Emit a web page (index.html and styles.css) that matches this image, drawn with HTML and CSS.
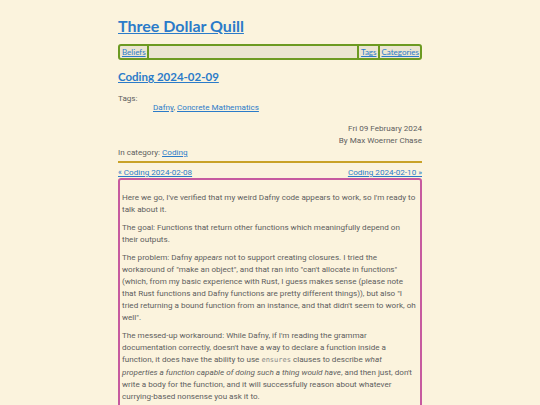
FILE: index.html
```html
<!DOCTYPE html>
<html>
<head>
<meta charset="utf-8">
<link rel="stylesheet" href="styles.css">
</head>
<body>
<div class="page">
  <header class="site-header">
    <h1 class="site-title"><a href="#">Three Dollar Quill</a></h1>
    <nav class="menu">
      <a class="menu-item first" href="#">Beliefs</a>
      <span class="menu-fill"></span>
      <a class="menu-item" href="#">Tags</a>
      <a class="menu-item" href="#">Categories</a>
    </nav>
  </header>
  <article>
    <h2 class="entry-title"><a href="#">Coding 2024-02-09</a></h2>
    <dl class="tags">
      <dt>Tags:</dt>
      <dd><a href="#">Dafny</a>, <a href="#">Concrete Mathematics</a></dd>
    </dl>
    <div class="byline">
      <div>Fri 09 February 2024</div>
      <div>By Max Woerner Chase</div>
    </div>
    <div class="category">In category: <a href="#">Coding</a></div>
    <hr class="rule">
    <div class="pager">
      <a href="#">« Coding 2024-02-08</a>
      <a href="#">Coding 2024-02-10 »</a>
    </div>
    <div class="entry">
      <p>Here we go, I've verified that my weird Dafny code appears to work, so I'm ready to talk about it.</p>
      <p>The goal: Functions that return other functions which meaningfully depend on their outputs.</p>
      <p>The problem: Dafny <em>appears</em> not to support creating closures. I tried the workaround of "make an object", and that ran into "can't allocate in functions" (which, from my basic experience with Rust, I guess makes sense (please note that Rust functions and Dafny functions are pretty different things)), but also "I tried returning a bound function from an instance, and that didn't seem to work, oh well".</p>
      <p>The messed-up workaround: While Dafny, if I'm reading the grammar documentation correctly, doesn't have a way to declare a function inside a function, it does have the ability to use <code>ensures</code> clauses to describe <em>what properties a function capable of doing such a thing would have</em>, and then just, don't write a body for the function, and it will successfully reason about whatever currying-based nonsense you ask it to.</p>
    </div>
  </article>
</div>
</body>
</html>
```

FILE: styles.css
```css
html, body {
  margin: 0;
  padding: 0;
  background: #fbf3dd;
}
body {
  font-family: Roboto, sans-serif;
  font-size: 8.1px;
  line-height: 12px;
  color: #5e5e5e;
}
a {
  color: #2b7bc9;
}
.page {
  width: 304px;
  margin: 0 auto;
  padding-top: 15px;
}
.site-title {
  margin: 0;
  font-family: Lato, sans-serif;
  font-weight: 700;
  font-size: 16px;
  line-height: 22px;
}
.menu {
  margin-top: 7px;
  display: flex;
  border: 2px solid #6c9a22;
  border-radius: 3px;
  background: #ebe5d1;
  font-family: Lato, sans-serif;
  font-size: 8px;
  line-height: 12px;
}
.menu-item {
  padding: 0 1px 0 2px;
  border-left: 2px solid #6c9a22;
}
.menu-item.first {
  border-left: none;
  border-right: 2px solid #6c9a22;
}
.menu-fill {
  flex: 1;
}
.entry-title {
  margin: 9px 0 0;
  font-family: Lato, sans-serif;
  font-weight: 700;
  font-size: 11.5px;
  line-height: 16px;
}
.tags {
  margin: 7px 0 0;
}
.tags dt {
  line-height: 12px;
}
.tags dd {
  margin: -3px 0 0 35px;
}
.byline {
  margin-top: 9px;
  text-align: right;
}
.rule {
  margin: 3px 0 0;
  border: none;
  border-top: 2px solid #c9a227;
  height: 0;
}
.pager {
  margin-top: 3px;
  display: flex;
  justify-content: space-between;
}
.entry {
  border: 2px solid #c65a9f;
  border-radius: 3px;
  padding: 5px 2px 4px 2px;
}
.entry p {
  margin: 6px 0;
}
code {
  font-family: "DejaVu Sans Mono", monospace;
  font-size: 7px;
  color: #888;
}
```
